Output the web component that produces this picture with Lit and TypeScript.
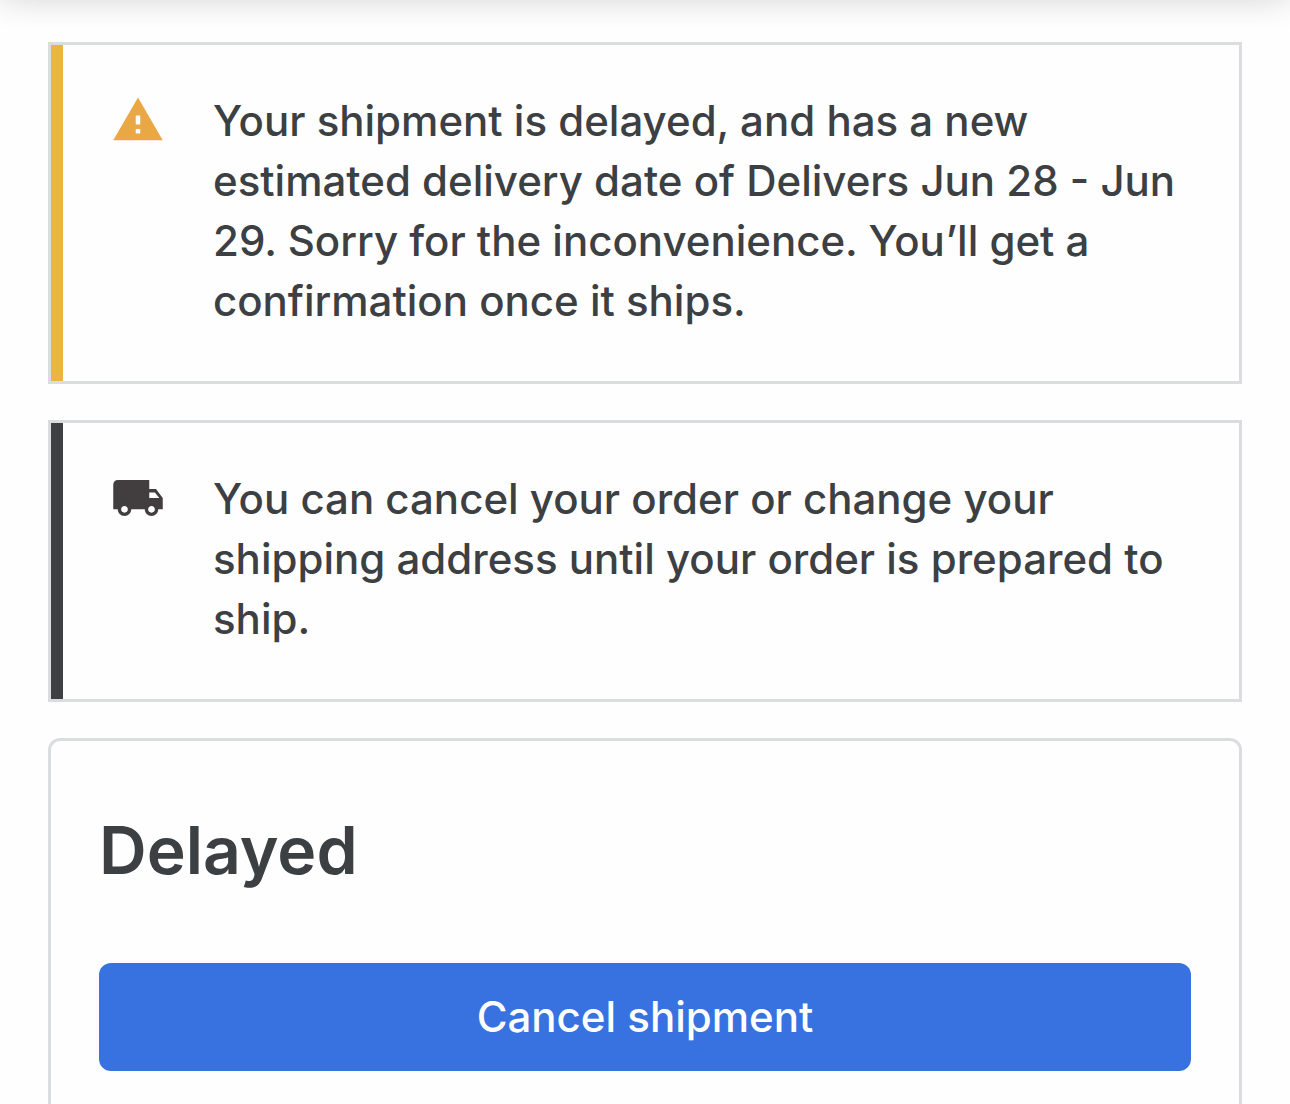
import { LitElement, html, css, svg, type TemplateResult } from "lit";
import { customElement, property } from "lit/decorators.js";

type NoticeKind = "warning" | "shipping";

interface Notice {
  kind: NoticeKind;
  text: string;
}

const NOTICES: Notice[] = [
  {
    kind: "warning",
    text: "Your shipment is delayed, and has a new estimated delivery date of Delivers Jun 28 - Jun 29. Sorry for the inconvenience. You’ll get a confirmation once it ships.",
  },
  {
    kind: "shipping",
    text: "You can cancel your order or change your shipping address until your order is prepared to ship.",
  },
];

const ICONS: Record<NoticeKind, TemplateResult> = {
  warning: svg`<path d="M1 21h22L12 2 1 21zm12-3h-2v-2h2v2zm0-4h-2v-4h2v4z"/>`,
  shipping: svg`<path d="M20 8h-3V4H3c-1.1 0-2 .9-2 2v11h2c0 1.66 1.34 3 3 3s3-1.34 3-3h6c0 1.66 1.34 3 3 3s3-1.34 3-3h2v-5l-3-4zM6 18.5c-.83 0-1.5-.67-1.5-1.5s.67-1.5 1.5-1.5 1.5.67 1.5 1.5-.67 1.5-1.5 1.5zm13.5-9l1.96 2.5H17V9.5h2.5zm-1.5 9c-.83 0-1.5-.67-1.5-1.5s.67-1.5 1.5-1.5 1.5.67 1.5 1.5-.67 1.5-1.5 1.5z"/>`,
};

@customElement("order-notice")
export class OrderNotice extends LitElement {
  @property() kind: NoticeKind = "warning";
  @property() text = "";

  static styles = css`
    :host {
      display: block;
    }
    .notice {
      display: flex;
      align-items: flex-start;
      gap: 48px;
      padding: 46px 48px 50px;
      border-left: 12px solid;
    }
    .warning {
      border-color: #eab540;
    }
    .shipping {
      border-color: #3c4043;
    }
    .icon {
      flex: none;
      width: 54px;
      height: 58px;
      fill: currentColor;
    }
    .warning .icon {
      color: #eaa845;
    }
    .shipping .icon {
      color: #423e3f;
    }
    .text {
      flex: 1;
      margin: 0;
      font-size: 42px;
      font-weight: 500;
      line-height: 60px;
    }
  `;

  render() {
    return html`
      <div class="notice ${this.kind}">
        <svg class="icon" viewBox="0 0 24 24" aria-hidden="true">${ICONS[this.kind]}</svg>
        <p class="text">${this.text}</p>
      </div>
    `;
  }
}

@customElement("app-root")
export class AppRoot extends LitElement {
  static styles = css`
    :host {
      display: block;
      min-height: 100vh;
      overflow: hidden;
      background: #fefefe;
      color: #3c4043;
      font-family: Inter, "Liberation Sans", sans-serif;
    }
    .topbar {
      height: 60px;
      margin-top: -60px;
      box-shadow: 0 0 32px rgba(0, 0, 0, 0.16);
    }
    .content {
      display: flex;
      flex-direction: column;
      gap: 36px;
      padding: 42px 48px;
    }
    .panel {
      border: 3px solid #dadce0;
    }
    .status {
      padding: 70px 48px 48px;
      border: 3px solid #dadce0;
      border-radius: 12px;
    }
    .title {
      margin: 0 0 74px;
      font-size: 66px;
      font-weight: 600;
      line-height: 78px;
    }
    .action {
      display: block;
      width: 100%;
      padding: 24px;
      border: 0;
      border-radius: 12px;
      background: #3871e0;
      color: #fff;
      font-family: inherit;
      font-size: 42px;
      font-weight: 500;
      line-height: 60px;
      cursor: pointer;
    }
  `;

  render() {
    return html`
      <div class="topbar"></div>
      <main class="content">
        ${NOTICES.map(
          (n) => html`<order-notice class="panel" .kind=${n.kind} .text=${n.text}></order-notice>`,
        )}
        <section class="status">
          <h1 class="title">Delayed</h1>
          <button class="action" type="button">Cancel shipment</button>
        </section>
      </main>
    `;
  }
}
